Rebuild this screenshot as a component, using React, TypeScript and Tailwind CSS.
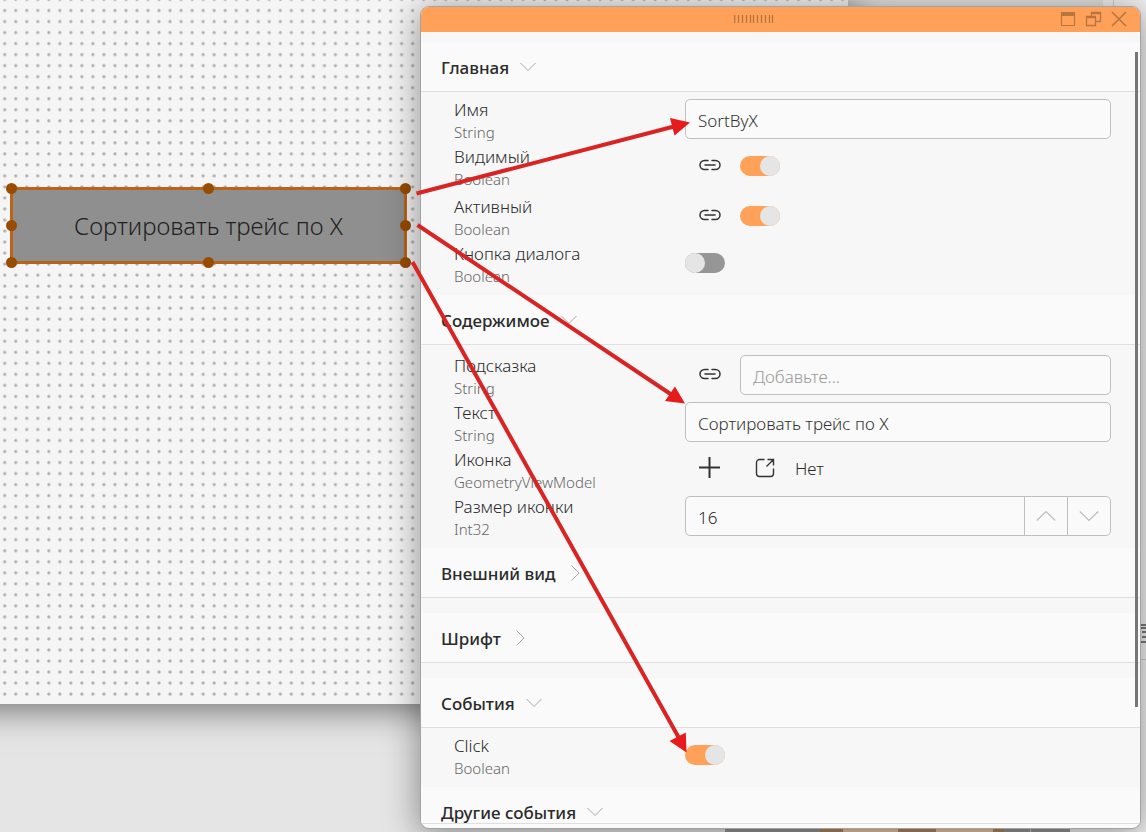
import React, { useState } from "react";

const iconStroke = { fill: "none", stroke: "#333", strokeWidth: 1.5 };

function LinkIcon() {
  return (
    <svg width="22" height="14" viewBox="0 0 22 14" {...iconStroke} strokeLinecap="round" aria-hidden="true">
      <path d="M9 2.500H5.500a4.500 4.500 0 0 0 0 9H9M13 2.500h3.500a4.500 4.500 0 0 1 0 9H13M6 7h10" />
    </svg>
  );
}

function Chevron({ open }: { open: boolean }) {
  return (
    <svg width="18" height="18" viewBox="0 0 18 18" fill="none" stroke="#a6a6a6" strokeWidth="1" aria-hidden="true">
      <path d={open ? "M1.500 4 9 11.500l7.500-7.500" : "M5.500.500 13 8l-7.500 7.500"} />
    </svg>
  );
}

function Toggle({ id, initial }: { id: string; initial: boolean }) {
  const [on, setOn] = useState(initial);
  return (
    <input
      id={id}
      type="checkbox"
      role="switch"
      checked={on}
      onChange={() => setOn(!on)}
      className="h-5 w-10 shrink-0 cursor-pointer appearance-none rounded-full bg-[#969696] before:block before:size-5 before:rounded-full before:bg-[#e5e5e5] checked:bg-[#ffa159] checked:before:translate-x-5"
    />
  );
}

function Field({ id, value, placeholder }: { id: string; value?: string; placeholder?: string }) {
  return (
    <input
      id={id}
      type="text"
      defaultValue={value}
      placeholder={placeholder}
      className="h-10 w-full min-w-0 rounded-[5px] border border-[#bfbfbf] bg-[#fafafa] px-3 pt-[3px] text-[17px] text-[#333] outline-none placeholder:text-[#999]"
    />
  );
}

function Linked({ children, name }: { children: React.ReactNode; name: string }) {
  return (
    <>
      <button type="button" aria-label={"Привязка: " + name} className="mb-[3px] flex h-6 w-[55px] shrink-0 items-center pl-[14px]">
        <LinkIcon />
      </button>
      {children}
    </>
  );
}

function Row({ id, name, type, children, className = "" }: { id: string; name: string; type: string; children: React.ReactNode; className?: string }) {
  return (
    <div className={"flex h-[47px] items-center pr-[29px] pl-[33px] " + className}>
      <label htmlFor={id} className="w-[231px] shrink-0 whitespace-nowrap">
        <span className="block text-[17px] leading-6">{name}</span>
        <span className="block text-[15px] leading-5 font-light text-[#666]">{type}</span>
      </label>
      <div className="flex min-w-0 flex-1 items-center pb-px">{children}</div>
    </div>
  );
}

function Section({ title, open, children }: { title: string; open: boolean; children?: React.ReactNode }) {
  return (
    <section>
      <h2 className="h-[50px] border-b border-[#dfdfdf] bg-[#fafafa] text-[17px] font-[550]">
        <button type="button" aria-expanded={open} className="flex h-full w-full items-center gap-[10px] pt-[2px] pl-[20px] text-left">
          {title}
          <Chevron open={open} />
        </button>
      </h2>
      {open ? <div className="pt-1 pb-2">{children}</div> : <div className="h-[15px]" />}
    </section>
  );
}

function TitleBar() {
  return (
    <header className="flex h-[25px] shrink-0 items-center bg-[#ffa159] pb-[2px]">
      <div className="flex-1" />
      <svg width="40" height="10" viewBox="0 0 40 10" fill="none" stroke="#b97540" strokeWidth="1.300" aria-hidden="true">
        <path d="M.7 1v8M4.500 1v8M8.500 1v8M12.500 1v8M16.500 1v8M19.500 1v8M23.500 1v8M27.500 1v8M31.500 1v8M35.500 1v8M38.500 1v8" />
      </svg>
      <div className="flex flex-1 justify-end gap-[9px] pr-[13px] pl-10">
        <button type="button" aria-label="Развернуть">
          <svg width="16" height="16" viewBox="0 0 16 16" fill="none" stroke="#b97540" strokeWidth="1.200">
            <path d="M1.500 1.500h13v13h-13zM1 2.500h14M1 3.500h14M1 4.500h14" />
          </svg>
        </button>
        <button type="button" aria-label="Восстановить">
          <svg width="17" height="16" viewBox="0 0 17 16" fill="none" stroke="#b97540" strokeWidth="1.300">
            <path d="M6.500 5V1.500h9v9H11M6 2.500h10M1.500 5.500h9v9h-9zM1 6.500h10" />
          </svg>
        </button>
        <button type="button" aria-label="Закрыть">
          <svg width="16" height="16" viewBox="0 0 16 16" fill="none" stroke="#b97540" strokeWidth="1.600">
            <path d="m1 1 14 14M15 1 1 15" />
          </svg>
        </button>
      </div>
    </header>
  );
}

function PropertiesWindow() {
  return (
    <div className="absolute top-[6px] right-[5px] bottom-[3px] left-[420px] flex flex-col overflow-hidden rounded-[9px] border border-[#a3a3a3] bg-[#fafafa] font-[350] text-[#2b2b2b] shadow-[0_4px_34px_2px_rgba(0,0,0,0.4)]">
      <TitleBar />
      <div className="relative min-h-0 flex-1 overflow-hidden border-b border-[#dfdfdf] bg-[#f7f7f7] pt-[10px]">
        <Section title="Главная" open>
          <Row id="name" name="Имя" type="String">
            <Field id="name" value="SortByX" />
          </Row>
          <Row id="visible" name="Видимый" type="Boolean" className="mb-[3px]">
            <Linked name="Видимый"><Toggle id="visible" initial /></Linked>
          </Row>
          <Row id="enabled" name="Активный" type="Boolean">
            <Linked name="Активный"><Toggle id="enabled" initial /></Linked>
          </Row>
          <Row id="dialog" name="Кнопка диалога" type="Boolean">
            <Toggle id="dialog" initial={false} />
          </Row>
        </Section>
        <Section title="Содержимое" open>
          <Row id="hint" name="Подсказка" type="String" className="mt-[3px]">
            <Linked name="Подсказка"><Field id="hint" placeholder="Добавьте..." /></Linked>
          </Row>
          <Row id="text" name="Текст" type="String">
            <Field id="text" value="Сортировать трейс по X" />
          </Row>
          <Row id="icon" name="Иконка" type="GeometryViewModel">
            <button id="icon" type="button" aria-label="Добавить иконку" className="pb-[3px] pl-[13px]">
              <svg width="23" height="23" viewBox="0 0 23 23" fill="none" stroke="#333" strokeWidth="2" aria-hidden="true">
                <path d="M1 11.500h21M11.500 1v21" />
              </svg>
            </button>
            <button type="button" aria-label="Открыть" className="ml-[34px] pb-[3px]">
              <svg width="20" height="20" viewBox="0 0 20 20" {...iconStroke} strokeWidth="1.400" aria-hidden="true">
                <path d="M9.500 1.500H4.500a3 3 0 0 0-3 3v11a3 3 0 0 0 3 3h11a3 3 0 0 0 3-3V10.500M11.500 8.500l7-7M12.500 1.500h6v6" />
              </svg>
            </button>
            <span className="pl-5 text-[17px]">Нет</span>
          </Row>
          <Row id="size" name="Размер иконки" type="Int32">
            <div className="flex h-10 min-w-0 flex-1 overflow-hidden rounded-[5px] border border-[#bfbfbf] bg-[#fafafa]">
              <input id="size" type="text" inputMode="numeric" defaultValue="16" className="min-w-0 flex-1 bg-transparent px-3 pt-[3px] text-[17px] outline-none" />
              <button type="button" aria-label="Увеличить" className="flex w-[43px] items-center justify-center border-l border-[#bfbfbf]">
                <svg width="20" height="12" viewBox="0 0 20 12" fill="none" stroke="#bcbcbc" strokeWidth="1.200"><path d="m.8 10.500 9.200-9 9.200 9" /></svg>
              </button>
              <button type="button" aria-label="Уменьшить" className="flex w-[43px] items-center justify-center border-l border-[#bfbfbf]">
                <svg width="20" height="12" viewBox="0 0 20 12" fill="none" stroke="#bcbcbc" strokeWidth="1.200"><path d="m.8 1.500 9.200 9 9.200-9" /></svg>
              </button>
            </div>
          </Row>
        </Section>
        <Section title="Внешний вид" open={false} />
        <Section title="Шрифт" open={false} />
        <Section title="События" open>
          <Row id="click" name="Click" type="Boolean">
            <Toggle id="click" initial />
          </Row>
        </Section>
        <Section title="Другие события" open />
        <div className="absolute top-[20px] right-[2px] h-[655px] w-[3px] bg-[#767676]" />
      </div>
      <div className="h-1 shrink-0" />
    </div>
  );
}

const handle = "absolute size-[11px] rounded-full bg-[#994c00]";

function DesignCanvas() {
  return (
    <div className="-ml-10 w-[888px] pl-10 shadow-[0_4px_32px_2px_rgba(0,0,0,0.5)]">
      <div className="relative h-[704px] bg-[#f5f5f5]">
        <svg className="absolute inset-0 h-full w-full" aria-hidden="true">
          <defs>
            <pattern id="dots" x="-0.800" y="5" width="11.025" height="11.025" patternUnits="userSpaceOnUse">
              <circle cx="5.500" cy="5.500" r="1.600" fill="#aeaeae" />
            </pattern>
          </defs>
          <rect width="848" height="699" fill="url(#dots)" />
        </svg>
        <div className="absolute top-[187px] left-[10px] h-[77px] w-[397px] border-[3px] border-[#b8651b] bg-[#8f8f8f]">
          <button type="button" className="h-full w-full text-2xl font-[350] text-[#1f1f1f]">Сортировать трейс по X</button>
          <i className={handle + " -top-[7px] -left-[7px]"} />
          <i className={handle + " -top-[7px] left-[190px]"} />
          <i className={handle + " -top-[7px] -right-[7px]"} />
          <i className={handle + " top-[30px] -left-[7px]"} />
          <i className={handle + " top-[30px] -right-[7px]"} />
          <i className={handle + " -bottom-[7px] -left-[7px]"} />
          <i className={handle + " -bottom-[7px] left-[190px]"} />
          <i className={handle + " -right-[7px] -bottom-[7px]"} />
        </div>
      </div>
    </div>
  );
}

function Backdrop() {
  return (
    <>
      <div className="absolute inset-y-0 right-0 w-[43px] bg-[#f4f4f4]">
        <div className="ml-[10px] h-[660px] border-b border-l border-[#d0d0d0]" />
      </div>
      <svg className="absolute top-[623px] right-0" width="6" height="20" viewBox="0 0 6 20" fill="none" stroke="#555" strokeWidth="1.500" aria-hidden="true">
        <path d="M0 2h6M0 5h6M2 9h4M2 14h4M0 19h6" />
      </svg>
      <div className="absolute right-0 bottom-0 left-[725px] flex h-[5px] bg-[#f4f4f4]">
        <div className="w-[95px] bg-[#969696]" />
        <div className="w-[23px] bg-[#b08662]" />
        <div className="w-[55px] bg-[#eac6a2]" />
        <div className="w-[38px] bg-[#b08662]" />
        <div className="w-[57px] bg-[#eac6a2]" />
        <div className="w-[11px] bg-[#b08662]" />
        <div className="w-[27px] border-r border-[#ccc] bg-[#969696]" />
        <div className="w-[39px] bg-[#969696]" />
      </div>
    </>
  );
}

function Arrows() {
  return (
    <svg className="pointer-events-none absolute top-0 left-0" width="700" height="770" viewBox="0 0 700 770" aria-hidden="true">
      <g stroke="#d92424" strokeWidth="4" fill="none">
        <path d="M416.500 193.500 674 126.500M417.500 225 672 395M412.500 262 679 738" />
      </g>
      <g fill="#e61c1c">
        <path d="M690 122.500 670 118l4.500 17.500zM685 403.500 675 386.500 665 401zM686.500 752.500 685.800 732.500 669.500 741z" />
      </g>
    </svg>
  );
}

export default function App() {
  return (
    <main className="relative min-h-screen overflow-hidden bg-[#e5e5e5] font-['Noto_Sans','Open_Sans',sans-serif]">
      <DesignCanvas />
      <Backdrop />
      <PropertiesWindow />
      <Arrows />
    </main>
  );
}
